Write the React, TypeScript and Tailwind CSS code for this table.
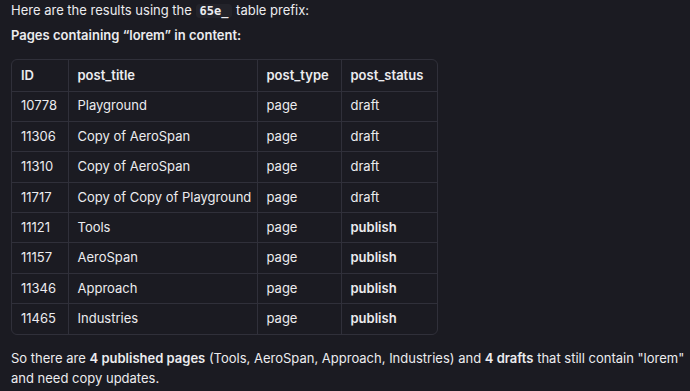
const rows = [
  { id: "10778", title: "Playground", type: "page", status: "draft" },
  { id: "11306", title: "Copy of AeroSpan", type: "page", status: "draft" },
  { id: "11310", title: "Copy of AeroSpan", type: "page", status: "draft" },
  { id: "11717", title: "Copy of Copy of Playground", type: "page", status: "draft" },
  { id: "11121", title: "Tools", type: "page", status: "publish" },
  { id: "11157", title: "AeroSpan", type: "page", status: "publish" },
  { id: "11346", title: "Approach", type: "page", status: "publish" },
  { id: "11465", title: "Industries", type: "page", status: "publish" },
];

export default function App() {
  return (
    <div
      className="w-[690px] h-[391px] overflow-hidden bg-[#1b1b22] text-[#ececef] text-[13px] px-[11px] pt-0"
      style={{ fontFamily: "Inter, 'Noto Sans', sans-serif" }}
    >
      <p className="leading-[20px] h-[20px]">
        Here are the results using the{" "}
        <code className="font-bold text-[12px] px-[4px] rounded bg-white/[0.04] font-['DejaVu_Sans_Mono',monospace]">
          65e_
        </code>{" "}
        table prefix:
      </p>
      <p className="font-semibold leading-[20px] mt-[5px]">Pages containing “lorem” in content:</p>

      <div className="mt-[14px] w-[427px] border border-[#30303a] rounded-[6px] overflow-hidden">
        <table className="w-full table-fixed border-collapse">
          <colgroup>
            <col className="w-[56px]" />
            <col className="w-[189px]" />
            <col className="w-[84px]" />
            <col />
          </colgroup>
          <thead>
            <tr className="h-[31px] text-left">
              <th className="font-semibold pl-[9px] border-r border-[#30303a]">ID</th>
              <th className="font-semibold pl-[9px] border-r border-[#30303a]">post_title</th>
              <th className="font-semibold pl-[9px] border-r border-[#30303a]">post_type</th>
              <th className="font-semibold pl-[9px]">post_status</th>
            </tr>
          </thead>
          <tbody>
            {rows.map((r) => (
              <tr key={r.id + r.title} className="h-[30.4px] border-t border-[#30303a]">
                <td className="pl-[9px] border-r border-[#30303a]">{r.id}</td>
                <td className="pl-[9px] border-r border-[#30303a]">{r.title}</td>
                <td className="pl-[9px] border-r border-[#30303a]">{r.type}</td>
                <td className={"pl-[9px] " + (r.status === "publish" ? "font-semibold" : "")}>{r.status}</td>
              </tr>
            ))}
          </tbody>
        </table>
      </div>

      <p className="mt-[13px] leading-[20px] w-[680px]">
        So there are <span className="font-semibold">4 published pages</span> (Tools, AeroSpan, Approach, Industries) and{" "}
        <span className="font-semibold">4 drafts</span> that still contain "lorem" and need copy updates.
      </p>
    </div>
  );
}
